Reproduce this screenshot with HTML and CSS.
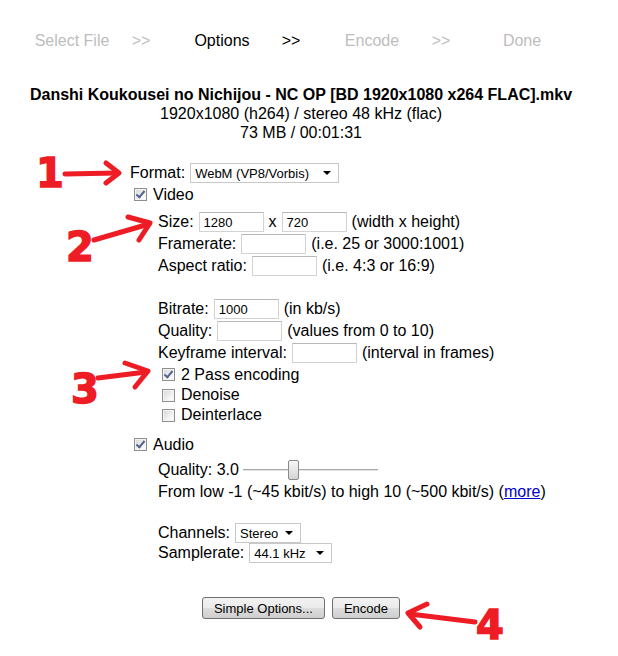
FILE: index.html
```html
<!DOCTYPE html>
<html lang="en">
<head>
    <meta charset="UTF-8">
    <title>Encode - Options</title>
    <link rel="stylesheet" href="styles.css">
</head>
<body>
    <div class="page">
        <div class="steps">
            <span class="step">Select File</span><span class="sep">&gt;&gt;</span>
            <span class="step active">Options</span><span class="sep active">&gt;&gt;</span>
            <span class="step">Encode</span><span class="sep">&gt;&gt;</span>
            <span class="step">Done</span>
        </div>

        <div class="info">
            <div class="filename">Danshi Koukousei no Nichijou - NC OP [BD 1920x1080 x264 FLAC].mkv</div>
            <div>1920x1080 (h264) / stereo 48 kHz (flac)</div>
            <div>73 MB / 00:01:31</div>
        </div>

        <form class="options">
            <div class="row">
                <span>Format:</span>
                <span class="select-wrap">
                    <select class="sel-format">
                        <option>WebM (VP8/Vorbis)</option>
                        <option>MP4 (H.264/AAC)</option>
                    </select>
                </span>
            </div>
            <label class="row check"><input type="checkbox" checked><span>Video</span></label>

            <div class="group video">
                <div class="row">
                    <span>Size:</span>
                    <input type="text" class="num" value="1280">
                    <span>x</span>
                    <input type="text" class="num" value="720">
                    <span>(width x height)</span>
                </div>
                <div class="row">
                    <span>Framerate:</span>
                    <input type="text" class="num">
                    <span>(i.e. 25 or 3000:1001)</span>
                </div>
                <div class="row">
                    <span>Aspect ratio:</span>
                    <input type="text" class="num">
                    <span>(i.e. 4:3 or 16:9)</span>
                </div>

                <div class="row spaced">
                    <span>Bitrate:</span>
                    <input type="text" class="num" value="1000">
                    <span>(in kb/s)</span>
                </div>
                <div class="row">
                    <span>Quality:</span>
                    <input type="text" class="num">
                    <span>(values from 0 to 10)</span>
                </div>
                <div class="row">
                    <span>Keyframe interval:</span>
                    <input type="text" class="num">
                    <span>(interval in frames)</span>
                </div>
                <label class="row check"><input type="checkbox" checked><span>2 Pass encoding</span></label>
                <label class="row check short"><input type="checkbox"><span>Denoise</span></label>
                <label class="row check short"><input type="checkbox"><span>Deinterlace</span></label>
            </div>

            <label class="row check audio-toggle"><input type="checkbox" checked><span>Audio</span></label>

            <div class="group audio">
                <div class="row">
                    <span>Quality: 3.0</span>
                    <input type="range" class="slider" min="-1" max="10" step="0.1" value="3">
                </div>
                <div class="row">
                    <span>From low -1 (~45 kbit/s) to high 10 (~500 kbit/s) (<a href="#">more</a>)</span>
                </div>

                <div class="row short spaced">
                    <span>Channels:</span>
                    <span class="select-wrap">
                        <select class="sel-channels">
                            <option>Stereo</option>
                            <option>Mono</option>
                        </select>
                    </span>
                </div>
                <div class="row short">
                    <span>Samplerate:</span>
                    <span class="select-wrap">
                        <select class="sel-rate">
                            <option>44.1 kHz</option>
                            <option>48 kHz</option>
                        </select>
                    </span>
                </div>
            </div>

            <div class="buttons">
                <button type="button" class="btn">Simple Options...</button>
                <button type="submit" class="btn">Encode</button>
            </div>
        </form>
    </div>

    <!-- red annotations drawn over the screenshot -->
    <svg class="marks" width="618" height="656" viewBox="0 0 618 656">
        <g class="arrow">
            <path d="M65 174 L117 173"/>
            <path d="M106 163 L119 173 L106 183"/>
            <path d="M94 240 L149 224"/>
            <path d="M128 217 L150 223 L139 240"/>
            <path d="M98 378 L146 372"/>
            <path d="M125 363 L148 371 L135 387"/>
            <path d="M475 622 L410 614"/>
            <path d="M427 604 L408 613 L420 627"/>
        </g>
        <text x="50" y="187">1</text>
        <text x="80" y="261">2</text>
        <text x="85" y="403">3</text>
        <text x="490" y="639">4</text>
    </svg>
</body>
</html>
```

FILE: styles.css
```css
html, body {
    height: 100%;
}

body {
    margin: 0 8px;
    font-family: "Liberation Sans", Arial, sans-serif;
    font-size: 16px;
    color: #000;
    background: #fff;
    position: relative;
    overflow: hidden;
}

.page {
    width: 586px;
}

/* wizard steps */
.steps {
    display: flex;
    padding-top: 31px;
    padding-left: 14px;
    height: 20px;
    line-height: 20px;
}

.step {
    width: 100px;
    text-align: center;
    color: #bdbdbd;
}

.sep {
    width: 38px;
    padding-right: 12px;
    text-align: center;
    color: #bdbdbd;
}

.steps .active {
    color: #000;
}

/* file info */
.info {
    margin-top: 34px;
    text-align: center;
    line-height: 19px;
}

.filename {
    font-weight: bold;
}

/* options form */
.options {
    margin-top: 20px;
    padding-left: 122px;
}

.row {
    display: flex;
    align-items: center;
    gap: 5px;
    height: 22px;
    white-space: nowrap;
}

.row.short {
    height: 20px;
}

.row.spaced {
    margin-top: 21px;
}

.group {
    margin-left: 28px;
}

.group.video {
    margin-top: 6px;
}

.group.audio {
    margin-top: 4px;
}

.group.audio .row.spaced {
    margin-top: 20px;
}

.audio-toggle {
    margin-top: 9px;
}

.check {
    height: 21px;
    gap: 6px;
}

.check input {
    appearance: none;
    -webkit-appearance: none;
    width: 13px;
    height: 13px;
    margin: 0 0 0 4px;
    border: 1px solid #8e8f8f;
    background: linear-gradient(135deg, #d6d6d6, #f6f6f6 70%, #fff);
    box-shadow: inset 0 0 0 1px #f4f4f4;
    position: relative;
}

.check input:checked::after {
    content: "";
    position: absolute;
    left: 3px;
    top: 0px;
    width: 3px;
    height: 7px;
    border-right: 2px solid #52648f;
    border-bottom: 2px solid #52648f;
    transform: rotate(40deg);
}

.num {
    width: 65px;
    height: 20px;
    box-sizing: border-box;
    padding: 1px 4px 0;
    border: 1px solid #d3d3d3;
    border-top-color: #b8b8b8;
    font-family: "Liberation Sans", Arial, sans-serif;
    font-size: 13px;
    color: #000;
    outline: none;
}

/* dropdowns */
.select-wrap {
    position: relative;
    display: inline-block;
}

.select-wrap::after {
    content: "";
    position: absolute;
    right: 8px;
    top: 8px;
    border-left: 4px solid transparent;
    border-right: 4px solid transparent;
    border-top: 4px solid #000;
    pointer-events: none;
}

.select-wrap select {
    appearance: none;
    -webkit-appearance: none;
    height: 20px;
    box-sizing: border-box;
    padding: 0 0 0 4px;
    border: 1px solid #c8c8c8;
    border-radius: 0;
    background: #fff;
    font-family: "Liberation Sans", Arial, sans-serif;
    font-size: 13px;
    color: #000;
    display: block;
}

.sel-format {
    width: 149px;
}

.sel-channels {
    width: 66px;
}

.sel-rate {
    width: 83px;
}

/* quality slider */
.slider {
    appearance: none;
    -webkit-appearance: none;
    width: 135px;
    height: 20px;
    margin: 0 0 0 -1px;
    background: transparent;
}

.slider::-webkit-slider-runnable-track {
    height: 3px;
    background: linear-gradient(#a8a8a8 0, #a8a8a8 1px, #e2e2e2 1px, #e2e2e2 2px, #fff 2px);
}

.slider::-webkit-slider-thumb {
    -webkit-appearance: none;
    width: 11px;
    height: 20px;
    margin-top: -9px;
    box-sizing: border-box;
    border: 1px solid #8a8a8a;
    border-radius: 2px;
    background: linear-gradient(#f7f7f7, #e6e6e6 50%, #d4d4d4);
}

a {
    color: #0000cc;
}

/* bottom buttons */
.buttons {
    display: flex;
    justify-content: center;
    gap: 7px;
    margin-top: 34px;
    margin-left: -122px;
}

.btn {
    height: 22px;
    padding: 0 11px;
    border: 1px solid #707070;
    border-radius: 3px;
    background: linear-gradient(#f2f2f2, #ebebeb 50%, #dddddd 50%, #cfcfcf);
    font-family: "Liberation Sans", Arial, sans-serif;
    font-size: 13px;
    color: #000;
}

/* annotations */
.marks {
    position: absolute;
    left: -8px;
    top: 0;
    pointer-events: none;
}

.marks .arrow path {
    fill: none;
    stroke: #ee1c24;
    stroke-width: 5;
    stroke-linecap: round;
    stroke-linejoin: round;
}

.marks text {
    font-family: "DejaVu Sans", sans-serif;
    font-weight: bold;
    font-size: 40px;
    fill: #ee1c24;
    stroke: #ee1c24;
    stroke-width: 1.5;
    text-anchor: middle;
}
```
